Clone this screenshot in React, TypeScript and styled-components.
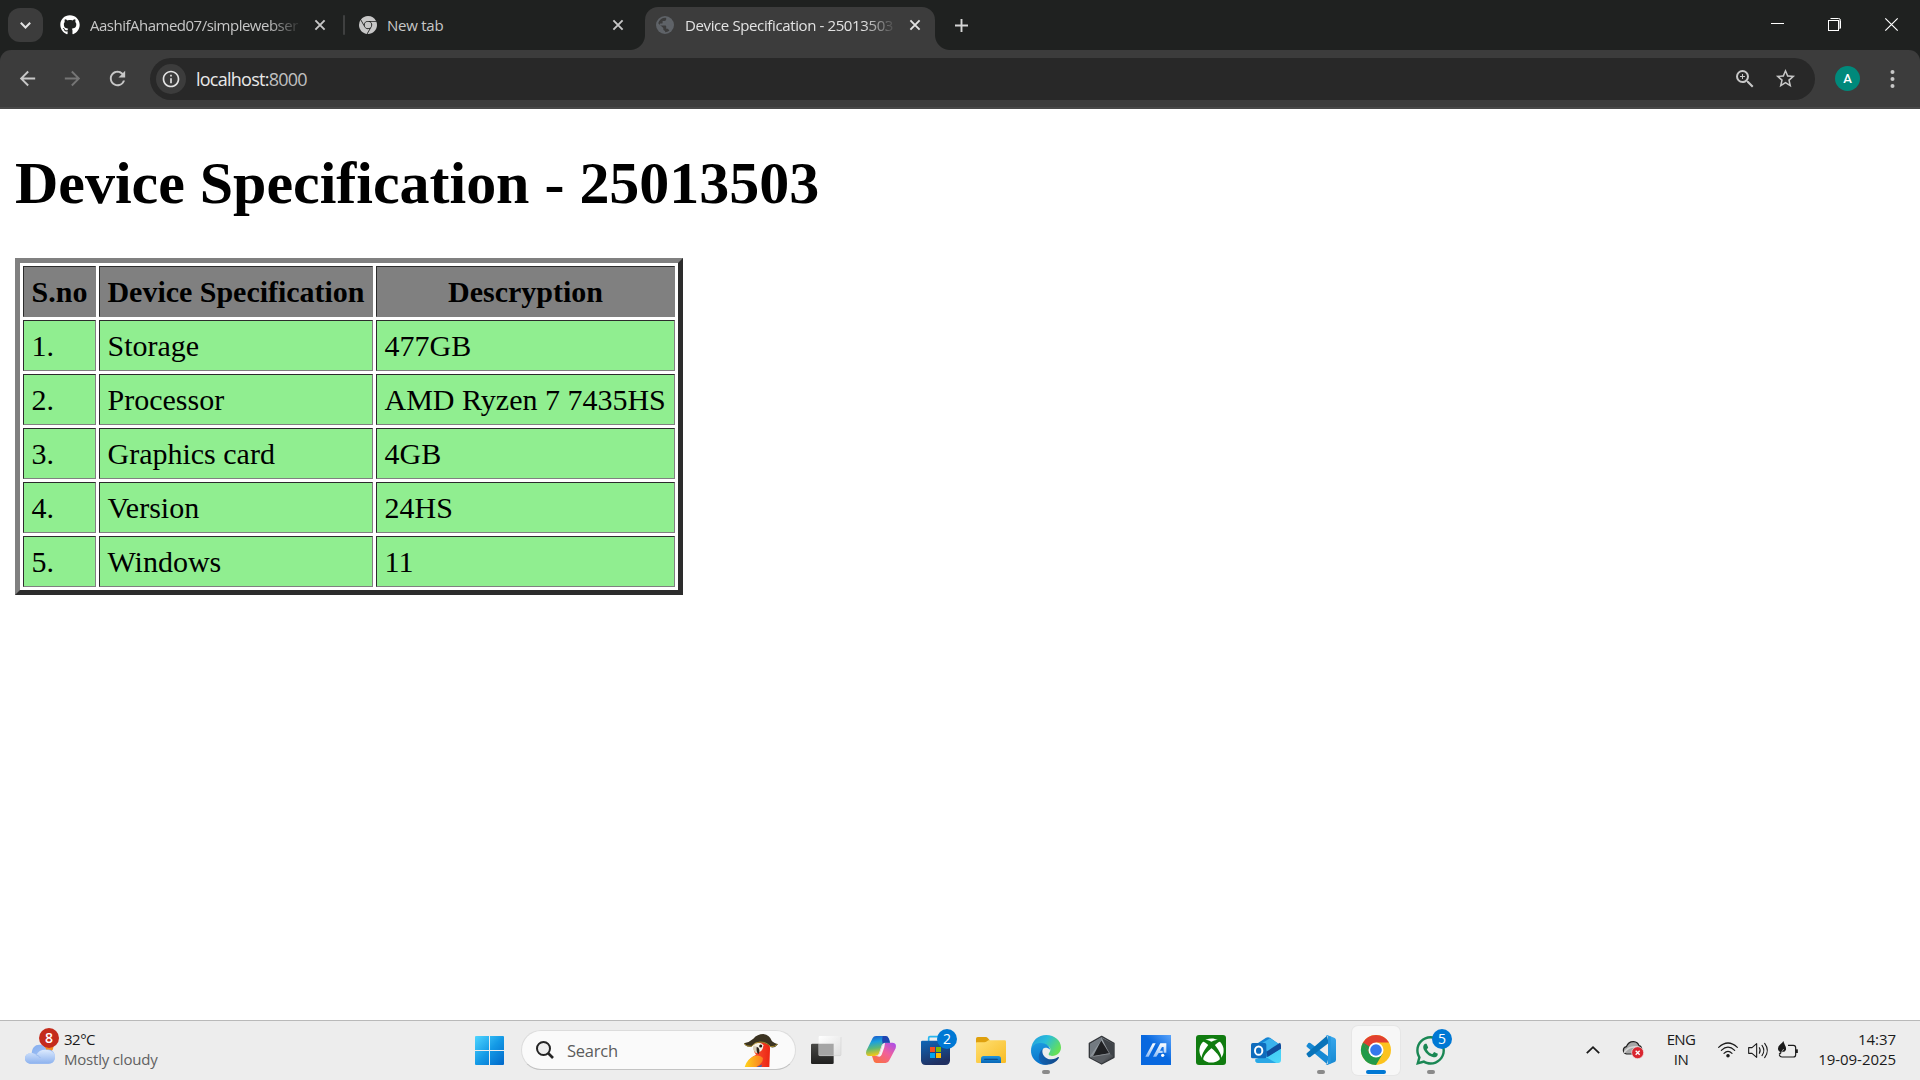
import React from "react";
import styled, { createGlobalStyle, css } from "styled-components";
import { FaGithub, FaXbox, FaWhatsapp } from "react-icons/fa";
import { SiGooglechrome } from "react-icons/si";
import { MdArrowBack, MdArrowForward, MdRefresh, MdInfoOutline, MdStarBorder, MdZoomIn } from "react-icons/md";

const Global = createGlobalStyle`
  * { box-sizing: border-box; }
  html, body { margin: 0; padding: 0; background: #fff; overflow: hidden; }
  body { font-family: "Open Sans", "Noto Sans", sans-serif; }
  svg { display: block; flex: none; overflow: visible; }
`;

const Screen = styled.div`
  width: 1920px;
  height: 1080px;
  display: flex;
  flex-direction: column;
  background: #fff;
`;

/* ---------- tab strip ---------- */
const TabStrip = styled.header`
  height: 50px;
  flex: none;
  display: flex;
  background: #1f2120;
  padding-left: 8px;
  color: #c7c7c7;
`;
const TabSearch = styled.button`
  width: 35px;
  height: 34px;
  margin: 8px 17px 0 0;
  padding: 0;
  border: 0;
  border-radius: 12px;
  background: #3c3c3c;
  display: grid;
  place-items: center;
`;
const TabBox = styled.div<{ $w: number; $pr?: number; $active?: boolean }>`
  position: relative;
  width: ${(p) => p.$w}px;
  height: 43px;
  margin-top: 7px;
  display: flex;
  align-items: center;
  padding: 0 ${(p) => p.$pr ?? 11}px 7px 0;
  color: ${(p) => (p.$active ? "#e3e3e3" : "#c7c7c7")};
  ${(p) =>
    p.$active &&
    css`
      background: #3c3c3c;
      border-radius: 13px 13px 0 0;
      padding-left: 11px;
      &::before, &::after {
        content: "";
        position: absolute;
        bottom: 0;
        width: 15px;
        height: 15px;
      }
      &::before { left: -15px; background: radial-gradient(circle at 0 0, #1f2120 14.5px, #3c3c3c 15.5px); }
      &::after { right: -15px; background: radial-gradient(circle at 100% 0, #1f2120 14.5px, #3c3c3c 15.5px); }
    `}
`;
const TabTitle = styled.span<{ $w: number; $ls: number; $gap: number; $fade?: boolean }>`
  width: ${(p) => p.$w}px;
  margin-left: ${(p) => p.$gap}px;
  white-space: nowrap;
  font-size: 15px;
  line-height: 22px;
  letter-spacing: ${(p) => p.$ls}px;
  ${(p) => p.$fade && css`mask-image: linear-gradient(90deg, #000 calc(100% - 34px), transparent);`}
`;
const TabClose = styled.span`
  margin-left: auto;
  width: 18px;
  height: 18px;
  display: grid;
  place-items: center;
`;
const TabDivider = styled.i`
  width: 2px;
  height: 20px;
  margin: 15px 14px 0 3px;
  border-radius: 1px;
  background: #3f4040;
`;
const NewTab = styled.span`
  width: 30px;
  height: 50px;
  margin-left: 11px;
  display: grid;
  place-items: center;
`;
const WindowButtons = styled.div`
  margin-left: auto;
  display: flex;
  height: 49px;
  align-items: center;
  gap: 44px;
  padding-right: 22px;
`;

/* ---------- toolbar ---------- */
const ToolbarBack = styled.div`
  height: 59px;
  flex: none;
  background: #1f2120;
`;
const Toolbar = styled.nav`
  height: 59px;
  display: flex;
  align-items: center;
  background: #3c3c3c;
  border-radius: 11px 11px 0 0;
  border-bottom: 2px solid #484848;
  padding: 0 0 0 16px;
  color: #c7c7c7;
`;
const NavIcon = styled.span<{ $dim?: boolean }>`
  width: 45px;
  color: ${(p) => (p.$dim ? "#757575" : "#c7c7c7")};
`;
const AddressBar = styled.div`
  width: 1665px;
  height: 42px;
  margin-left: -1px;
  border-radius: 21px;
  background: #282828;
  display: flex;
  align-items: center;
  padding: 0 18px 0 6px;
`;
const SiteInfo = styled.span`
  width: 30px;
  height: 30px;
  border-radius: 50%;
  background: #3c3c3c;
  display: grid;
  place-items: center;
  color: #e3e3e3;
`;
const Url = styled.span`
  margin: 0 auto 0 10px;
  font-size: 18px;
  line-height: 24px;
  letter-spacing: -0.75px;
  color: #e8e8e8;
  padding-top: 1px;
  em { font-style: normal; color: #c0c0c0; }
`;
const AddressAction = styled.span`
  margin-left: 17px;
`;
const Avatar = styled.span`
  width: 25px;
  height: 25px;
  margin: 0 31px 0 20px;
  border-radius: 50%;
  background: #00897b;
  color: #fff;
  font: 500 13px/25px Roboto, sans-serif;
  text-align: center;
`;

/* ---------- page ---------- */
const Page = styled.main`
  flex: 1;
  padding: 0 15px;
  font-family: "Liberation Serif", "Times New Roman", serif;
  color: #000;
`;
const Heading = styled.h1`
  margin: 40px 0;
  font-size: 60px;
  line-height: 69px;
  font-weight: 700;
  letter-spacing: -0.02px;
  white-space: nowrap;
`;
const SpecTable = styled.table`
  width: 668px;
  table-layout: fixed;
  border: 5px solid;
  border-color: #808080 #2c2c2c #2c2c2c #808080;
  border-spacing: 3px;
  font-size: 30px;
  line-height: 34px;
`;
const Row = styled.tr<{ $head?: boolean }>`
  height: 51px;
  background: ${(p) => (p.$head ? "#808080" : "#90ee90")};
`;
const cell = css`
  height: 51px;
  padding: 1px 0 0;
  border: 1px solid;
  border-color: #2c2c2c #808080 #808080 #2c2c2c;
  white-space: nowrap;
`;
const Th = styled.th`${cell} text-align: center; letter-spacing: -0.02px;`;
const Td = styled.td`${cell} padding-left: 7.5px;`;

/* ---------- taskbar ---------- */
const Taskbar = styled.footer`
  height: 60px;
  flex: none;
  border-top: 1px solid #b9b9b9;
  background: #ededed;
  display: flex;
  padding-left: 25px;
  color: #1b1b1b;
`;
const Weather = styled.div`
  position: relative;
  display: flex;
  align-items: center;
  width: 450px;
  padding-bottom: 1px;
  font-size: 15px;
  line-height: 20px;
`;
const WeatherText = styled.div`
  margin: -2px 0 0 9px;
  letter-spacing: -0.5px;
  span { display: block; letter-spacing: -0.2px; color: #616161; }
`;
const Badge = styled.b<{ $x: number; $y: number; $bg: string; $bold?: boolean }>`
  position: absolute;
  left: ${(p) => p.$x}px;
  top: ${(p) => p.$y}px;
  width: 20px;
  height: 20px;
  border-radius: 50%;
  background: ${(p) => p.$bg};
  color: #fff;
  text-align: center;
  font-size: 14px;
  line-height: 20px;
  font-weight: ${(p) => (p.$bold ? 600 : 400)};
`;
const Start = styled.span`
  margin-top: 15px;
  width: 46px;
`;
const SearchBox = styled.div`
  width: 275px;
  height: 40px;
  margin-top: 9px;
  border: 1px solid #dcdcdc;
  border-bottom-color: #c3c3c3;
  border-radius: 20px;
  background: #fafafa;
  display: flex;
  align-items: center;
  padding: 0 17px 0 14px;
  font-size: 16.5px;
  letter-spacing: -0.25px;
  color: #5c5c5c;
  span { margin: 0 auto 0 13px; padding-top: 1px; }
`;
const Apps = styled.div`
  display: flex;
  gap: 1px;
  margin-left: 3px;
`;
const AppButton = styled.div<{ $active?: boolean }>`
  position: relative;
  width: 54px;
  padding: 14px 12px 0;
  ${(p) =>
    p.$active &&
    css`
      width: 48px;
      height: 49px;
      margin: 5px 3px 0;
      padding: 9px 9px 0;
      border-radius: 6px;
      background: #f7f7f7;
      box-shadow: 0 0 0 1px #e6e6e6;
    `}
`;
const Running = styled.i<{ $active?: boolean }>`
  display: block;
  width: ${(p) => (p.$active ? 20 : 8)}px;
  height: 4px;
  margin: 5px auto 0;
  border-radius: 2px;
  background: ${(p) => (p.$active ? "#0078d4" : "#8a8a8a")};
`;
const Tray = styled.div`
  margin-left: auto;
  display: flex;
  align-items: center;
  padding: 0 24px 1px 0;
  font-size: 15px;
  line-height: 20px;
`;
const TraySlot = styled.span<{ $ml: number }>`
  margin-left: ${(p) => p.$ml}px;
`;
const Language = styled.span`
  width: 40px;
  margin: -2px 0 0 17px;
  text-align: center;
  letter-spacing: -0.6px;
`;
const Clock = styled.span`
  width: 98px;
  margin-top: -2px;
  text-align: right;
  white-space: nowrap;
  letter-spacing: -0.05px;
`;

/* ---------- drawings ---------- */
const Cross = ({ s = 10, w = 1.9 }: { s?: number; w?: number }) => (
  <svg width={s} height={s} viewBox="0 0 10 10" stroke="currentColor" strokeWidth={(w * 10) / s} fill="none">
    <path d="M.4.4 9.6 9.6M9.6.4.4 9.6" />
  </svg>
);
const Globe = () => (
  <svg width="18" height="18" viewBox="0 0 18 18">
    <circle cx="9" cy="9" r="9" fill="#5f6368" />
    <path d="M10.2 1.8v1.4c0 1-.8 1.7-1.8 1.7H6.6v1.8c0 .5-.4.9-.9.9H4v1.8h5.3c.5 0 .9.4.9.9v2.5h.9c.8 0 1.4.5 1.7 1.2l.6.8a7.1 7.1 0 0 1-4.3 1.5v-1.6c-1 0-1.8-.8-1.8-1.8V12L2.2 7.300A7 7 0 0 1 10.200 1.800Z" fill="#3c3c3c" />
    <path d="M11 4.200 15 5.500 16 9.500 13.500 8.500 11.500 8.500 10 6.500Z" fill="#5f6368" />
  </svg>
);
const Art = ({ children }: { children: React.ReactNode }) => (
  <svg width="30" height="30" viewBox="0 0 90 90">{children}</svg>
);

const GradientSheet = styled.svg`
  position: absolute;
`;
const Gradients = () => (
  <GradientSheet width="0" height="0">
    <defs>
      <linearGradient id="winAll" gradientUnits="userSpaceOnUse" x1="0" y1="0" x2="29" y2="29"><stop stopColor="#4fd5ff" /><stop offset=".5" stopColor="#149ae6" /><stop offset="1" stopColor="#0067c9" /></linearGradient>
      <linearGradient id="cloud" x2="0" y2="1"><stop stopColor="#dceafe" /><stop offset="1" stopColor="#8db2ee" /></linearGradient>
      <linearGradient id="cloudBack" x2="1" y2="1"><stop stopColor="#7da9ee" /><stop offset="1" stopColor="#b8d0f8" /></linearGradient>
      <linearGradient id="tvDark" x2="0" y2="1"><stop stopColor="#484846" /><stop offset="1" stopColor="#20201f" /></linearGradient>
      <linearGradient id="tvLight" x2="1" y2="1"><stop stopColor="#fff" /><stop offset="1" stopColor="#dedede" /></linearGradient>
      <linearGradient id="copA" x2=".2" y2="1"><stop stopColor="#1b4fc8" /><stop offset=".35" stopColor="#1ba0df" /><stop offset=".65" stopColor="#5cb878" /><stop offset="1" stopColor="#f2c718" /></linearGradient>
      <linearGradient id="copB" x1="1" x2=".2" y2="1"><stop stopColor="#a44df0" /><stop offset=".5" stopColor="#f0609c" /><stop offset="1" stopColor="#fb7040" /></linearGradient>
      <linearGradient id="store" x2=".4" y2="1"><stop stopColor="#0d66b8" /><stop offset="1" stopColor="#203061" /></linearGradient>
      <linearGradient id="folder" x2="1" y2="1"><stop stopColor="#ffdf72" /><stop offset="1" stopColor="#f8bc24" /></linearGradient>
      <linearGradient id="folderBlue" x2="0" y2="1"><stop stopColor="#2095dd" /><stop offset="1" stopColor="#0866b6" /></linearGradient>
      <linearGradient id="edgeTop" x1="0" x2="1" y2=".5"><stop stopColor="#2499dc" /><stop offset=".5" stopColor="#29bddb" /><stop offset="1" stopColor="#65df59" /></linearGradient>
      <linearGradient id="edgeLeft" x2=".2" y2="1"><stop stopColor="#1d9ce0" /><stop offset="1" stopColor="#0872cb" /></linearGradient>
      <linearGradient id="edgeDark" x2="1" y2="0"><stop stopColor="#1263b4" /><stop offset="1" stopColor="#114786" /></linearGradient>
      <linearGradient id="armoury" x2=".8" y2="1"><stop stopColor="#5c6268" /><stop offset=".35" stopColor="#9aa1a8" /><stop offset="1" stopColor="#3a3c40" /></linearGradient>
      <linearGradient id="asus" x1="0" y1="1" x2="1" y2="0"><stop offset=".55" stopColor="#0868df" /><stop offset="1" stopColor="#5ba4fb" /></linearGradient>
      <linearGradient id="asusMark" x2="0" y2="1"><stop stopColor="#fff" /><stop offset="1" stopColor="#8fbdf6" /></linearGradient>
      <linearGradient id="olFront" x1="0" x2="1" y2="1"><stop stopColor="#39c5ef" /><stop offset="1" stopColor="#50d8fb" /></linearGradient>
      <linearGradient id="vsc" x2="0" y2="1"><stop stopColor="#39a8ed" /><stop offset="1" stopColor="#1688d1" /></linearGradient>
      <linearGradient id="parrotWing" x2="1" y2="0"><stop stopColor="#ffd51b" /><stop offset="1" stopColor="#fa7b21" /></linearGradient>
      <linearGradient id="parrotRed" x2="1" y2="0"><stop stopColor="#ff6a42" /><stop offset="1" stopColor="#ec2513" /></linearGradient>
    </defs>
  </GradientSheet>
);

const WeatherIcon = () => (
  <svg width="30" height="29" viewBox="0 -21 90 87">
    <circle cx="70" cy="13" r="15" fill="#f58a1f" />
    <path d="M20 34C20 15 29 5 43 5c13 0 19 8 21 15C79 17 90 26 90 41c0 13-8 21-20 21H18C7 62 0 55 0 46c0-9 8-16 20-16Z" fill="url(#cloudBack)" />
    <path d="M18 62C7 62 0 55 0 47c0-10 7-17 18-17 6 0 11 2 16 6 5-11 14-16 27-16 17 0 29 9 29 22s-8 20-20 20Z" fill="url(#cloud)" />
    <path d="M34 36c6 2 10 5 12 9" stroke="#98b9ef" strokeWidth="3" fill="none" />
  </svg>
);
const Parrot = () => (
  <svg width="34" height="33" viewBox="0 0 102 99">
    <path d="M30 34Q44 18 66 22q13 6 12 24l-2 53H4Q14 72 36 62 26 50 30 34Z" fill="url(#parrotRed)" />
    <path d="M2 99Q8 76 30 66q18-5 27 6 0 16-20 27Z" fill="url(#parrotWing)" />
    <path d="m38 99 16-7-2 7Z" fill="#346ab7" />
    <path d="M27 40q2-10 14-14 13-1 17 8 0 13-10 19l-10 4Z" fill="#f6f0e2" />
    <path d="M27 38q5-4 10 0 1 12 4 18-5 2-8-1-7-8-6-17Z" fill="#d9cfb8" />
    <path d="M38 38q7 1 8 9 2 8-3 14-7-8-5-23Z" fill="#2d211b" />
    <circle cx="50" cy="36" r="4.500" fill="#241a16" />
    <path d="M0 28q17-4 28-14Q40 0 58 0q19 2 26 22 7 6 18 9-8 11-20 9Q67 25 48 25q-16 0-26 13Q4 40 0 28Z" fill="#3b3321" />
    <path d="M1 29q5 9 21 8 12-13 26-13 20 0 32 14 12 1 20-7" fill="none" stroke="#a2882b" strokeWidth="3" />
  </svg>
);

const TaskViewIcon = () => (
  <Art>
    <path d="M0 30q0-4 4-4h64v58q0 3-4 3H4q-4 0-4-3Z" fill="url(#tvDark)" />
    <rect x="23" y="3" width="67" height="60" rx="3" fill="url(#tvLight)" />
    <path d="M23 26h45v37H27q-4 0-4-4Z" fill="#a5a5a5" />
    <path d="M27 62h60q3 0 3-3V6" stroke="#cfcfcf" strokeWidth="1.500" fill="none" />
  </Art>
);
const CopilotIcon = () => (
  <Art>
    <path d="M20 9Q23 3 30 3h29q7 0 10 9l3 11H57q-7 0-10 8l-8 24q-3 8-12 8H9Q-3 62 1 47Z" fill="url(#copA)" />
    <path d="M70 76q-3 8-11 8H32q-8 0-10-9l-4-12h12q8 0 11-8l8-24q3-8 11-8h20q13 1 9 17Z" fill="url(#copB)" />
    <path d="M50 3h9q7 0 10 9l3 11H57q-4 0-7 4-3-14 0-24Z" fill="#2044b0" />
    <path d="M41 55 49 31q2-6 8-8l-2 14-8 22q-2 5-7 6l-9-2q8-1 10-8Z" fill="#f5f3f2" />
  </Art>
);
const StoreIcon = () => (
  <Art>
    <path d="M23 19V9q0-4 4-4h34q4 0 4 4v10" stroke="#28b6f0" strokeWidth="5" fill="none" />
    <path d="M0 21q0-4 4-4h79q4 0 4 4v55q0 14-14 14H14Q0 90 0 76Z" fill="url(#store)" />
    <path d="M27 36h15v15H27Z" fill="#f25022" /><path d="M45 36h15v15H45Z" fill="#7fba00" />
    <path d="M27 54h15v15H27Z" fill="#00a4ef" /><path d="M45 54h15v15H45Z" fill="#ffb900" />
  </Art>
);
const FolderIcon = () => (
  <Art>
    <path d="M0 11q0-5 5-5h24q4 0 7 4l5 6v14H0Z" fill="#dfa00d" />
    <path d="M0 24q0-2 2-2h23q4 0 8-3l4-3h49q4 0 4 4v60q0 4-4 4H4q-4 0-4-4Z" fill="url(#folder)" />
    <path d="M15 84V71q0-8 8-8h44q8 0 8 8v13Z" fill="url(#folderBlue)" />
    <path d="M26 73h38" stroke="#0b4d8d" strokeWidth="4" strokeLinecap="round" />
  </Art>
);
const EdgeIcon = () => (
  <Art>
    <path d="M0 45C2 16 22 0 46 0c25 0 44 17 44 37 0 16-11 26-27 26-8 0-12-4-9-8 11-15-1-25-13-25C24 30 5 34 0 45Z" fill="url(#edgeTop)" />
    <path d="M0 45c3-15 18-24 35-20 14 2 22 11 22 19-9-8-18-6-22-1-10 16 1 34 18 43-4 3-13 4-17 3C14 85-1 67 0 45Z" fill="url(#edgeLeft)" />
    <path d="M35 42c-5 17 10 32 26 31 10 0 16-5 20-7 2-1 4 1 2 4-8 13-25 21-41 19-15-2-21-17-18-29 2-8 6-14 11-18Z" fill="url(#edgeDark)" />
  </Art>
);
const ArmouryIcon = () => (
  <svg width="32" height="30" viewBox="-4 0 96 90">
    <path d="m43 4 37 21v42L43 87 6 67V25Z" fill="url(#armoury)" stroke="#34373b" strokeWidth="4" strokeLinejoin="round" />
    <path d="m43 8 35 18v38l-12-9Z" fill="#3f4348" />
    <path d="M42 16 66 55 17 64Z" fill="#1f2023" />
    <path d="M42 16 8 64V27L42 7Z" fill="#737a81" />
    <path d="m8 66 9-2 49-9-23 30Z" fill="#595d62" />
    <path d="M43 16 67 56 18 64" stroke="#c9ced3" strokeWidth="2" fill="none" opacity=".55" />
  </svg>
);
const AsusIcon = () => (
  <Art>
    <path d="M0 0h90v90H0Z" fill="url(#asus)" />
    <path d="m13 65 22-40h9L23 65Z" fill="url(#asusMark)" />
    <path d="M36 65 58 25h18v28h-8V36h-5l-6 11h8v7H53l-7 11Z" fill="url(#asusMark)" />
    <circle cx="65" cy="61" r="5" fill="#fff" />
  </Art>
);
const XboxTile = styled.span`
  width: 30px;
  height: 30px;
  display: grid;
  place-items: center;
  border-radius: 3px;
  background: #107c10;
  color: #fff;
`;
const OutlookIcon = () => (
  <Art>
    <path d="M13 29 45 8q6-3 12 0l33 24v12L50 68 13 40Z" fill="#1483d3" />
    <path d="m34 24 23-14 31 19-38 25Z" fill="#3ab2ed" />
    <path d="m46 50 41-27q3 3 3 9v10L50 67Z" fill="#114d9c" />
    <path d="M90 41v34q0 9-9 9H22q-9 0-9-8l37-10Z" fill="url(#olFront)" />
    <path d="m13 72 27-8 36 20H22q-9 0-9-8Z" fill="#2aa7e5" />
    <rect y="24" width="46" height="46" rx="5" fill="#0f6cbd" />
    <ellipse cx="23" cy="47" rx="11" ry="12.500" fill="none" stroke="#fff" strokeWidth="6" />
  </Art>
);
const VsCodeIcon = () => (
  <Art>
    <path d="M3 30q-4 3 0 6l60 51 5-22L13 24q-3-2-6 0Z" fill="#1689d4" />
    <path d="M3 60q-4-3 0-6L63 2l5 22L13 66q-3 2-6 0Z" fill="#0873b9" />
    <path d="m64 0 22 9q4 2 4 7v58q0 5-4 7l-22 9q-3 0-5-3 7 2 7-4V7q0-6-7-4 2-3 5-3Z" fill="url(#vsc)" />
    <path d="M66 4h8v82h-8Z" fill="#2396df" />
  </Art>
);
const ChromeIcon = () => (
  <Art>
    <circle cx="45" cy="45" r="45" fill="#fcc31e" />
    <path d="M45 45 6 22.500A45 45 0 0 0 45 90l20-34Z" fill="#229a49" />
    <path d="M6 22.500A45 45 0 0 1 84 22.500H45v23l-20 11Z" fill="#e2402f" />
    <path d="m6 22.500 20 34 12-14Z" fill="#229a49" />
    <circle cx="45" cy="45" r="22.500" fill="#fff" />
    <circle cx="45" cy="45" r="17.500" fill="#3478ed" />
  </Art>
);
const WhatsAppIcon = styled(FaWhatsapp)`
  margin: -1px 0 -2px -2px;
  color: #1a8754;
`;
const OneDriveIcon = () => (
  <svg width="21" height="18" viewBox="0 0 63 54">
    <path d="M11 39Q1 37 1 28q0-9 9-11Q17 1 32 2q12 1 16 12 8 2 8 12 0 13-12 13Z" fill="#a8a8a8" stroke="#202020" strokeWidth="3.500" />
    <path d="M3 35q16-22 43-16" stroke="#d6d6d6" strokeWidth="5" fill="none" />
    <circle cx="44" cy="35" r="18" fill="#d9252f" stroke="#ededed" strokeWidth="2" />
    <path d="m38 29 12 12m0-12L38 41" stroke="#fff" strokeWidth="4" />
  </svg>
);
const WifiIcon = () => (
  <svg width="20" height="16" viewBox="0 0 60 48" fill="none" stroke="#1b1b1b" strokeWidth="3.600" strokeLinecap="round">
    <path d="M2 16q28-26 56 0M10 25q20-19 40 0M18 34q12-12 24 0" />
    <circle cx="30" cy="41" r="3.500" fill="#1b1b1b" />
  </svg>
);
const SoundIcon = () => (
  <svg width="20" height="17" viewBox="0 0 60 51" fill="none" stroke="#1b1b1b" strokeWidth="3.300" strokeLinecap="round" strokeLinejoin="round">
    <path d="M2 17h10L26 5v41L12 34H2ZM34 17q5 8 0 17M42 10q11 15 0 31M50 4q16 21 0 43" />
  </svg>
);
const BatteryIcon = () => (
  <svg width="20" height="17" viewBox="0 0 60 51" fill="none" stroke="#1b1b1b" strokeWidth="3.500">
    <path d="M30 10h16q7 0 7 7v21q0 7-7 7H12q-6 0-8-6" />
    <path d="M56 22v11" strokeWidth="7" />
    <path d="M16-3q-3 6-8 9-9 7-8 16 1 6 7 8l-5 6 3 3 8-9q9 0 11-7 1-7-3-13-3-7-5-13Z" fill="#1b1b1b" stroke="none" />
    <path d="M9 33 17 21" stroke="#ededed" strokeWidth="2" />
  </svg>
);

const rows = [
  ["1.", "Storage", "477GB"],
  ["2.", "Processor", "AMD Ryzen 7 7435HS"],
  ["3.", "Graphics card", "4GB"],
  ["4.", "Version", "24HS"],
  ["5.", "Windows", "11"],
];

export default function App() {
  return (
    <Screen>
      <Global />
      <Gradients />
      <TabStrip>
        <TabSearch>
          <svg width="11" height="7" viewBox="0 0 11 7" fill="none" stroke="#e3e3e3" strokeWidth="2"><path d="m.8.8 4.700 4.700L10.200.8" /></svg>
        </TabSearch>
        <TabBox $w={280}>
          <FaGithub size={20} color="#fff" />
          <TabTitle $w={212} $gap={10} $ls={-0.5} $fade>AashifAhamed07/simplewebser</TabTitle>
          <TabClose><Cross /></TabClose>
        </TabBox>
        <TabDivider />
        <TabBox $w={286} $pr={18}>
          <SiGooglechrome size={18} />
          <TabTitle $w={120} $gap={10} $ls={-0.25}>New tab</TabTitle>
          <TabClose><Cross /></TabClose>
        </TabBox>
        <TabBox $w={290} $active>
          <Globe />
          <TabTitle $w={212} $gap={11} $ls={-0.38} $fade>Device Specification - 25013503</TabTitle>
          <TabClose><Cross /></TabClose>
        </TabBox>
        <NewTab>
          <svg width="13" height="13" viewBox="0 0 13 13" stroke="#d5d5d5" strokeWidth="1.900"><path d="M6.500 0v13M0 6.500h13" /></svg>
        </NewTab>
        <WindowButtons>
          <svg width="13" height="13" viewBox="0 0 13 13"><path d="M0 5h13v1H0Z" fill="#fff" /></svg>
          <svg width="13" height="13" viewBox="0 0 13 13" fill="none" stroke="#fff">
            <path d="M2.500.5h8q2 0 2 2v8" /><path d="M11.500 2v9" stroke="#8d8d8d" /><rect x=".5" y="2.500" width="10" height="10" />
          </svg>
          <svg width="13" height="13" viewBox="0 0 13 13" stroke="#fff" strokeWidth="1.200"><path d="m.3.3 12.400 12.400M12.700.3.300 12.700" /></svg>
        </WindowButtons>
      </TabStrip>
      <ToolbarBack>
        <Toolbar>
          <NavIcon><MdArrowBack size={23} /></NavIcon>
          <NavIcon $dim><MdArrowForward size={23} /></NavIcon>
          <NavIcon><MdRefresh size={23} /></NavIcon>
          <AddressBar>
            <SiteInfo><MdInfoOutline size={20} /></SiteInfo>
            <Url>localhost:<em>8000</em></Url>
            <AddressAction><MdZoomIn size={24} /></AddressAction>
            <AddressAction><MdStarBorder size={23} /></AddressAction>
          </AddressBar>
          <Avatar>A</Avatar>
          <svg width="4" height="18" viewBox="0 0 4 18" fill="#c7c7c7"><circle cx="1.500" cy="2" r="2" /><circle cx="1.500" cy="9" r="2" /><circle cx="1.500" cy="16" r="2" /></svg>
        </Toolbar>
      </ToolbarBack>
      <Page>
        <Heading>Device Specification - 25013503</Heading>
        <SpecTable>
          <colgroup><col width="73" /><col width="274" /><col width="299" /></colgroup>
          <tbody>
            <Row $head><Th>S.no</Th><Th>Device Specification</Th><Th>Descryption</Th></Row>
            {rows.map((r) => (
              <Row key={r[0]}>{r.map((c) => <Td key={c}>{c}</Td>)}</Row>
            ))}
          </tbody>
        </SpecTable>
      </Page>
      <Taskbar>
        <Weather>
          <WeatherIcon />
          <Badge $x={14} $y={7} $bg="#c42b1c" $bold>8</Badge>
          <WeatherText>32°C<span>Mostly cloudy</span></WeatherText>
        </Weather>
        <Start>
          <svg width="29" height="29" viewBox="0 0 29 29" fill="url(#winAll)"><path d="M1 0h13v14H0V1q0-1 1-1ZM15 0h13q1 0 1 1v13H15ZM0 15h14v14H1q-1 0-1-1ZM15 15h14v13q0 1-1 1H15Z" /></svg>
        </Start>
        <SearchBox>
          <svg width="18" height="18" viewBox="0 0 18 18" fill="#eeeeee" stroke="#242424" strokeWidth="2"><circle cx="7.500" cy="7.500" r="6.500" /><path d="m12 12 5 5" strokeWidth="2.600" /></svg>
          <span>Search</span>
          <Parrot />
        </SearchBox>
        <Apps>
          <AppButton><TaskViewIcon /></AppButton>
          <AppButton><CopilotIcon /></AppButton>
          <AppButton><StoreIcon /><Badge $x={28} $y={8} $bg="#0078d4">2</Badge></AppButton>
          <AppButton><FolderIcon /></AppButton>
          <AppButton><EdgeIcon /><Running /></AppButton>
          <AppButton><ArmouryIcon /></AppButton>
          <AppButton><AsusIcon /></AppButton>
          <AppButton><XboxTile><FaXbox size={25} /></XboxTile></AppButton>
          <AppButton><OutlookIcon /></AppButton>
          <AppButton><VsCodeIcon /><Running /></AppButton>
          <AppButton $active><ChromeIcon /><Running $active /></AppButton>
          <AppButton><WhatsAppIcon size={33} /><Badge $x={28} $y={8} $bg="#0078d4">5</Badge><Running /></AppButton>
        </Apps>
        <Tray>
          <svg width="14" height="8" viewBox="0 0 14 8" fill="none" stroke="#1b1b1b" strokeWidth="1.800"><path d="m.8 7.200 6.200-6 6.200 6" /></svg>
          <TraySlot $ml={23}><OneDriveIcon /></TraySlot>
          <Language>ENG<br />IN</Language>
          <TraySlot $ml={17}><WifiIcon /></TraySlot>
          <TraySlot $ml={10}><SoundIcon /></TraySlot>
          <TraySlot $ml={10}><BatteryIcon /></TraySlot>
          <Clock>14:37<br />19-09-2025</Clock>
        </Tray>
      </Taskbar>
    </Screen>
  );
}
